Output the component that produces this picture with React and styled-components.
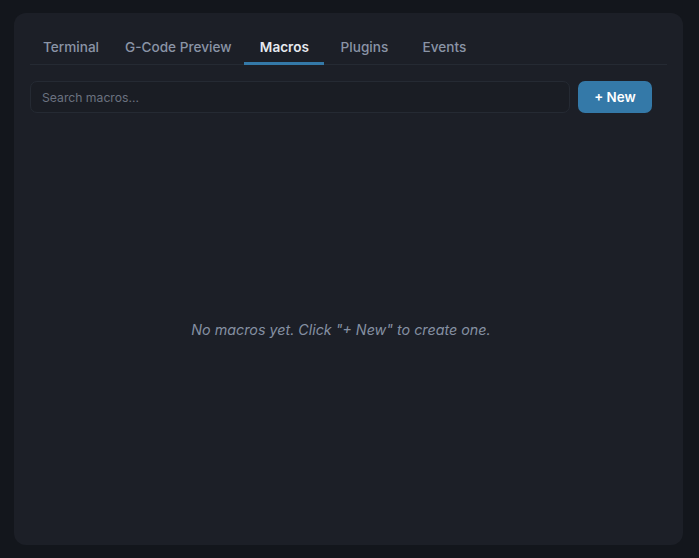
import { useState } from "react";
import styled, { createGlobalStyle } from "styled-components";

const Global = createGlobalStyle`
  html, body {
    margin: 0;
    padding: 0;
    background: #13161c;
    font-family: Inter, "Noto Sans", sans-serif;
  }
`

const Page = styled.div`
  box-sizing: border-box;
  width: 100vw;
  height: 100vh;
  padding: 13px 16px 13px 14px;
  display: flex;
`

const Panel = styled.div`
  flex: 1;
  display: flex;
  flex-direction: column;
  background: #1c1f27;
  border-radius: 12px;
  padding: 16px;
`

const TabBar = styled.div`
  display: flex;
  border-bottom: 1px solid #252a33;
`

const Tab = styled.button`
  min-width: 80px;
  height: 36px;
  padding: 2px 13px 0;
  margin-bottom: -1px;
  background: none;
  border: none;
  border-bottom: 3px solid ${(p) => (p.active ? "#3479a8" : "transparent")};
  color: ${(p) => (p.active ? "#e6e9ef" : "#8a94a6")};
  font-family: inherit;
  font-size: 13.6px;
  font-weight: ${(p) => (p.active ? 600 : 500)};
  cursor: pointer;
`

const Pane = styled.div`
  flex: 1;
  display: flex;
  flex-direction: column;
  padding: 16px 15px 0 0;
`

const Toolbar = styled.div`
  display: flex;
  gap: 8px;
`

const Search = styled.input`
  flex: 1;
  box-sizing: border-box;
  height: 32px;
  padding: 0 11px;
  background: #1a1d24;
  border: 1px solid #252a33;
  border-radius: 7px;
  color: #e6e9ef;
  font-family: inherit;
  font-size: 12.2px;
  outline: none;

  &::placeholder {
    color: #6b7280;
  }
`

const NewButton = styled.button`
  height: 32px;
  width: 74px;
  background: #3479a8;
  border: none;
  border-radius: 7px;
  color: #fff;
  font-family: inherit;
  font-size: 13.4px;
  font-weight: 600;
  cursor: pointer;
`

const List = styled.div`
  flex: 1;
  display: flex;
  align-items: center;
  justify-content: center;
  padding-top: 16px;
`

const Empty = styled.p`
  margin: 0;
  color: #8590a2;
  font-size: 14.3px;
  font-style: italic;
`

const tabs = ["Terminal", "G-Code Preview", "Macros", "Plugins", "Events"];

function App() {
  const [active, setActive] = useState("Macros");

  return (
    <Page>
      <Global />
      <Panel>
        <TabBar>
          {tabs.map((t) => (
            <Tab key={t} active={t === active} onClick={() => setActive(t)}>
              {t}
            </Tab>
          ))}
        </TabBar>
        <Pane>
          <Toolbar>
            <Search placeholder="Search macros..." />
            <NewButton>+ New</NewButton>
          </Toolbar>
          <List>
            <Empty>No macros yet. Click "+ New" to create one.</Empty>
          </List>
        </Pane>
      </Panel>
    </Page>
  );
}

export default App;
